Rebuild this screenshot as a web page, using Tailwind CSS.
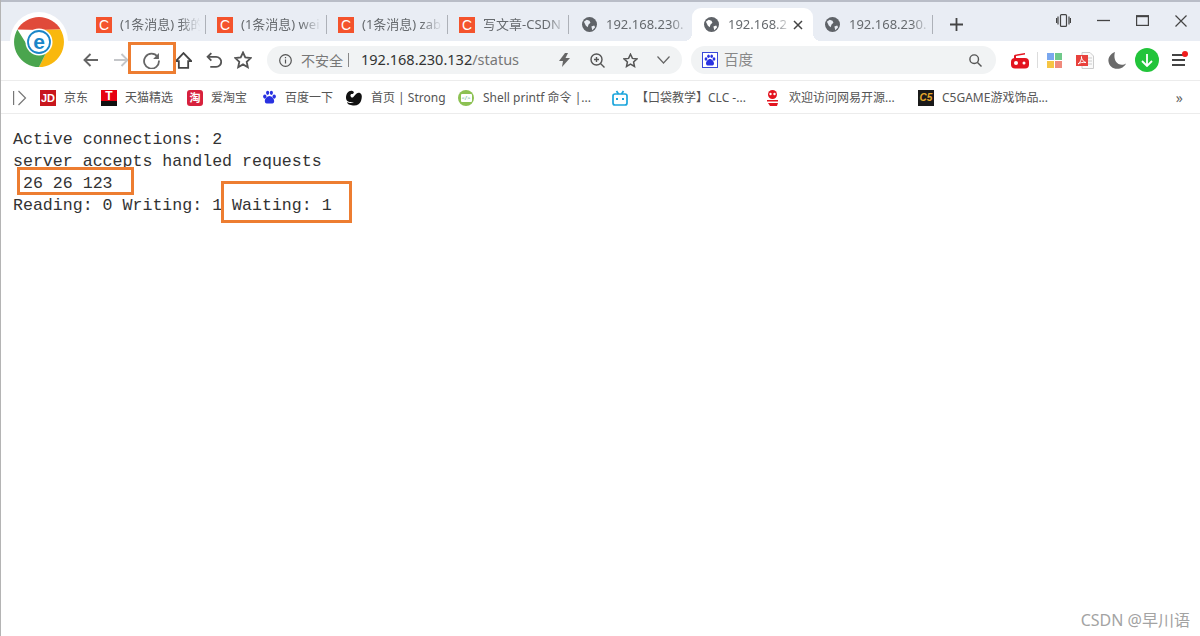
<!doctype html>
<html lang="zh">
<head>
<meta charset="utf-8">
<title>192.168.230.132/status</title>
<script src="https://cdn.jsdelivr.net/npm/@tailwindcss/browser@4"></script>
</head>
<body class="bg-white">
<div class="relative w-[1200px] h-[636px] overflow-hidden flex flex-col border-l border-[#b4b4b4] font-['Noto_Sans','Noto_Sans_CJK_SC',sans-serif] text-[#666a6e]">

  <!-- 标签栏 -->
  <div class="h-[41px] shrink-0 flex items-end bg-[#e9edf4] border-t-2 border-[#b9bdc7] pl-[85px] text-[13px]">
    <div class="w-[121px] h-[33px] flex items-center pl-[10px] pr-[1px]">
      <span class="w-4 h-4 shrink-0 bg-[#f4532c] text-white text-[14px] leading-4 text-center font-['Liberation_Sans']">C</span>
      <span class="ml-2 flex-1 whitespace-nowrap [mask-image:linear-gradient(to_right,black_70%,transparent_95%)]">(1条消息) 我的</span>
      <span class="w-px h-[19px] bg-[#adb1b8]"></span>
    </div>
    <div class="w-[121px] h-[33px] flex items-center pl-[10px] pr-[1px]">
      <span class="w-4 h-4 shrink-0 bg-[#f4532c] text-white text-[14px] leading-4 text-center font-['Liberation_Sans']">C</span>
      <span class="ml-2 flex-1 whitespace-nowrap [mask-image:linear-gradient(to_right,black_70%,transparent_95%)]">(1条消息) wei</span>
      <span class="w-px h-[19px] bg-[#adb1b8]"></span>
    </div>
    <div class="w-[121px] h-[33px] flex items-center pl-[10px] pr-[1px]">
      <span class="w-4 h-4 shrink-0 bg-[#f4532c] text-white text-[14px] leading-4 text-center font-['Liberation_Sans']">C</span>
      <span class="ml-2 flex-1 whitespace-nowrap [mask-image:linear-gradient(to_right,black_70%,transparent_95%)]">(1条消息) zab</span>
      <span class="w-px h-[19px] bg-[#adb1b8]"></span>
    </div>
    <div class="w-[121px] h-[33px] flex items-center pl-[10px] pr-[1px]">
      <span class="w-4 h-4 shrink-0 bg-[#f4532c] text-white text-[14px] leading-4 text-center font-['Liberation_Sans']">C</span>
      <span class="ml-2 flex-1 whitespace-nowrap [mask-image:linear-gradient(to_right,black_75%,transparent_98%)]">写文章-CSDN</span>
      <span class="w-px h-[19px] bg-[#adb1b8]"></span>
    </div>
    <div class="w-[122px] h-[33px] flex items-center pl-[12px] pr-[1px]">
      <svg class="w-[15px] h-[15px] shrink-0" viewBox="0 0 16 16"><circle cx="8" cy="8" r="8" fill="#5f6368"/><path d="M2 5l3-2 3 1 1 2-2 2-1 3-2-2-1-2zM10 10l3-1 1 2-3 3z" fill="#e9edf4"/></svg>
      <span class="ml-[9px] flex-1 whitespace-nowrap [mask-image:linear-gradient(to_right,black_75%,transparent_98%)]">192.168.230.</span>
    </div>
    <div class="relative w-[121px] h-[33px] flex items-center pl-[12px] pr-[10px] bg-white rounded-t-[9px] before:absolute before:left-[-8px] before:bottom-0 before:w-2 before:h-2 before:bg-[radial-gradient(circle_at_0_0,#e9edf4_8px,white_8px)] after:absolute after:right-[-8px] after:bottom-0 after:w-2 after:h-2 after:bg-[radial-gradient(circle_at_100%_0,#e9edf4_8px,white_8px)]">
      <svg class="w-[15px] h-[15px] shrink-0" viewBox="0 0 16 16"><circle cx="8" cy="8" r="8" fill="#5f6368"/><path d="M2 5l3-2 3 1 1 2-2 2-1 3-2-2-1-2zM10 10l3-1 1 2-3 3z" fill="#fff"/></svg>
      <span class="ml-[9px] flex-1 whitespace-nowrap [mask-image:linear-gradient(to_right,black_70%,transparent_98%)]">192.168.2</span>
      <svg class="w-[10px] h-[10px] shrink-0" viewBox="0 0 10 10"><path d="M1 1l8 8M9 1l-8 8" stroke="#444" stroke-width="1.500"/></svg>
    </div>
    <div class="w-[121px] h-[33px] flex items-center pl-[12px] pr-[1px]">
      <svg class="w-[15px] h-[15px] shrink-0" viewBox="0 0 16 16"><circle cx="8" cy="8" r="8" fill="#5f6368"/><path d="M2 5l3-2 3 1 1 2-2 2-1 3-2-2-1-2zM10 10l3-1 1 2-3 3z" fill="#e9edf4"/></svg>
      <span class="ml-[9px] flex-1 whitespace-nowrap [mask-image:linear-gradient(to_right,black_75%,transparent_98%)]">192.168.230.</span>
      <span class="w-px h-[19px] bg-[#adb1b8]"></span>
    </div>
    <div class="h-[33px] flex items-center">
      <svg class="ml-[16px] w-[13px] h-[13px]" viewBox="0 0 13 13"><path d="M6.500 0v13M0 6.500h13" stroke="#444" stroke-width="1.800"/></svg>
    </div>

    <!-- 窗口按钮 -->
    <div class="ml-auto flex items-center self-start h-[38px] pb-[1px] pr-[13px] gap-[26px]">
      <svg class="w-[15px] h-[13px]" viewBox="0 0 15 13" fill="none" stroke="#444" stroke-width="1.200"><rect x="4.500" y=".6" width="6" height="11.800" rx="1"/><path d="M2 2.500v8M13 2.500v8M.5 4v5M14.500 4v5"/></svg>
      <svg class="w-[13px] h-[13px]" viewBox="0 0 13 13"><path d="M0 6.500h13" stroke="#444" stroke-width="1.300"/></svg>
      <svg class="w-[13px] h-[11px]" viewBox="0 0 13 11" fill="none" stroke="#444"><rect x=".6" y="1" width="11.800" height="9.400" stroke-width="1.200"/><path d="M0 1.200h13" stroke-width="2"/></svg>
      <svg class="w-[12px] h-[12px]" viewBox="0 0 12 12"><path d="M.5.500l11 11M11.500.500l-11 11" stroke="#444" stroke-width="1.200"/></svg>
    </div>
  </div>

  <!-- 工具栏 -->
  <div class="h-[39px] shrink-0 flex items-center bg-white pb-[1px]">
    <div class="w-[266px] shrink-0 flex items-center pl-[82px]">
      <svg class="w-4 h-[14px]" viewBox="0 0 16 14" fill="none" stroke="#666" stroke-width="1.900"><path d="M15 7H1.500M7.500 1L1.500 7l6 6"/></svg>
      <svg class="ml-[14px] w-4 h-[14px]" viewBox="0 0 16 14" fill="none" stroke="#c4c6c9" stroke-width="1.900"><path d="M1 7h13.500M8.500 1l6 6-6 6"/></svg>
      <svg class="ml-[14px] w-[17px] h-[17px]" viewBox="0 0 16 16" fill="none" stroke="#666" stroke-width="1.700"><path d="M13.700 4.500A7 7 0 1 0 15 8"/><path d="M15 1v5.500H9.500z" fill="#666" stroke="none"/></svg>
      <svg class="ml-[15px] w-[17px] h-[17px]" viewBox="0 0 16 16" fill="none" stroke="#444" stroke-width="1.700"><path d="M.8 8.500L8 1l7.200 7.500h-2.800V15H3.600V8.500z"/></svg>
      <svg class="ml-[14px] w-4 h-4" viewBox="0 0 15 15" fill="none" stroke="#555" stroke-width="1.700"><path d="M5 1L1.500 4.500 5 8M1.500 4.500h8a4.500 4.500 0 0 1 0 9.500H4"/></svg>
      <svg class="ml-[12px] w-[18px] h-[18px]" viewBox="0 0 18 18" fill="none" stroke="#555" stroke-width="1.800"><path d="M9 1.500l2.300 5 5.400.6-4 3.700 1.100 5.400L9 13.400 4.200 16.200l1.100-5.400-4-3.700 5.400-.6z"/></svg>
    </div>

    <div class="w-[415px] h-[28px] shrink-0 flex items-center rounded-full bg-[#f1f3f4] pl-[12px] text-[14.500px]">
      <svg class="w-[13px] h-[13px] shrink-0" viewBox="0 0 13 13" fill="none" stroke="#555" stroke-width="1.200"><circle cx="6.500" cy="6.500" r="5.800"/><path d="M6.500 5.500v4M6.500 3v1.300"/></svg>
      <span class="ml-[9px] text-[14px] text-[#777]">不安全</span>
      <span class="ml-[5px] w-px h-[14px] bg-[#888]"></span>
      <span class="ml-[12px] text-[#333]">192.168.230.132<span class="text-[#777]">/status</span></span>
      <svg class="ml-auto w-[11px] h-[14px] shrink-0" viewBox="0 0 11 14" fill="#666"><path d="M6 0L0 8h4l-1 6 8-9H6.500L9 0z"/></svg>
      <svg class="ml-[20px] w-[15px] h-[15px] shrink-0" viewBox="0 0 15 15" fill="none" stroke="#555" stroke-width="1.400"><circle cx="6.500" cy="6.500" r="5.500"/><path d="M10.500 10.500l4 4M4 6.500h5M6.500 4v5"/></svg>
      <svg class="ml-[18px] w-[15px] h-[15px] shrink-0" viewBox="0 0 18 18" fill="none" stroke="#555" stroke-width="1.800"><path d="M9 1.500l2.300 5 5.400.6-4 3.700 1.100 5.400L9 13.400 4.200 16.200l1.100-5.400-4-3.700 5.400-.6z"/></svg>
      <svg class="ml-[19px] mr-[12px] w-[13px] h-[8px] shrink-0" viewBox="0 0 13 8" fill="none" stroke="#666" stroke-width="1.200"><path d="M.5.500l6 6.500 6-6.500"/></svg>
    </div>

    <div class="ml-[9px] w-[305px] h-[28px] shrink-0 flex items-center rounded-full bg-[#f1f3f4] pl-[11px] text-[14.500px] text-[#888]">
      <svg class="w-4 h-4 shrink-0" viewBox="0 0 16 16"><rect x=".5" y=".5" width="15" height="15" fill="#fff" stroke="#3a49d8"/><g fill="#2932e1"><ellipse cx="4" cy="7" rx="1.400" ry="1.800"/><ellipse cx="6.500" cy="4.200" rx="1.300" ry="1.800"/><ellipse cx="9.700" cy="4.200" rx="1.300" ry="1.800"/><ellipse cx="12" cy="7" rx="1.400" ry="1.800"/><path d="M8 7c-2 0-4 2.500-4 4.500C4 14 6.500 13.500 8 13.500s4 .5 4-2C12 9.500 10 7 8 7z"/></g></svg>
      <span class="ml-[6px]">百度</span>
      <svg class="ml-auto mr-[14px] w-[13px] h-[13px]" viewBox="0 0 13 13" fill="none" stroke="#555" stroke-width="1.400"><circle cx="5.200" cy="5.200" r="4.300"/><path d="M8.500 8.500l4 4"/></svg>
    </div>

    <div class="ml-[15px] flex items-center">
      <svg class="w-[18px] h-[17px]" viewBox="0 0 18 17" fill="#e3141f"><path d="M3 6.500V4q0-1 1-1.300L14 1v1.500L5 4v2.500z"/><rect y="6" width="18" height="10.500" rx="4"/><circle cx="5" cy="11" r="2" fill="#fff"/><circle cx="13" cy="11" r="1.500" fill="#fff"/></svg>
      <span class="ml-[8px] w-px h-[16px] bg-[#dcdcdc]"></span>
      <div class="ml-[9px] w-[15px] h-[15px] grid grid-cols-2 gap-[1px]">
        <span class="bg-[#7aa7ee]"></span><span class="bg-[#6fc98a]"></span><span class="bg-[#f6c544]"></span><span class="bg-[#f08a7c]"></span>
      </div>
      <svg class="ml-[14px] w-[18px] h-[17px]" viewBox="0 0 18 17"><path d="M6 .5h8l3.500 3.500v12.500H6z" fill="#fafafa" stroke="#ccc"/><path d="M12 6h4M12 9h4M12 12h4" stroke="#ccc"/><rect y="3" width="12" height="11" fill="#e8413c"/><path d="M2 12c2-1 4-5 3.500-7.500C5 6 7 10 10 10.500 7 10 4 10.500 2 12z" fill="none" stroke="#fff"/></svg>
      <svg class="ml-[14px] w-[18px] h-[17px]" viewBox="0 0 18 17"><path d="M7 0C2 2 0 6 .5 9.500 1 14 5 17 9.500 16.800c3.500 0 7-2 8.500-5.300-2 1.500-5 1.800-7.500.5C7 10 5.500 5 7 0z" fill="#6a6a6a"/></svg>
      <span class="ml-[9px] w-6 h-6 flex items-center justify-center rounded-full bg-[#22c43a]">
        <svg class="w-[12px] h-[13px]" viewBox="0 0 12 13" fill="none" stroke="#fff" stroke-width="1.800"><path d="M6 0v12M1 7l5 5 5-5"/></svg>
      </span>
      <span class="relative ml-[13px] w-[13px] h-[12px] flex flex-col justify-between">
        <span class="h-[2px] bg-[#444]"></span><span class="h-[2px] bg-[#444]"></span><span class="h-[2px] bg-[#444]"></span>
        <span class="absolute -top-[3px] right-[-3px] w-[6px] h-[6px] rounded-full bg-[#f01c1c]"></span>
      </span>
    </div>
  </div>

  <!-- 书签栏 -->
  <div class="h-[34px] shrink-0 flex items-center bg-white pt-[1px] border-t border-b border-[#ececec] text-[12px] whitespace-nowrap text-[#555]">
    <svg class="ml-[12px] w-[14px] h-[16px]" viewBox="0 0 14 16" fill="none" stroke="#777" stroke-width="1.200"><path d="M.6 1v14"/><path d="M5.500 1l7 7-7 7"/></svg>
    <span class="ml-[13px] w-4 h-4 bg-[#c8161d] text-white text-[11px] leading-4 text-center font-bold font-['Liberation_Sans']">JD</span>
    <span class="ml-2 w-[37px]">京东</span>
    <span class="w-4 h-4 bg-[linear-gradient(#e60012_70%,#111_70%)] text-white text-[12px] leading-[12px] text-center font-bold font-['Liberation_Sans']">T</span>
    <span class="ml-2 w-[62px]">天猫精选</span>
    <span class="w-4 h-4 rounded-[3px] bg-[#d7213d] text-white text-[11px] leading-4 text-center font-bold">淘</span>
    <span class="ml-2 w-[51px]">爱淘宝</span>
    <svg class="w-[15px] h-[15px]" viewBox="0 0 16 16"><g fill="#2932e1"><ellipse cx="3" cy="7" rx="1.800" ry="2.200"/><ellipse cx="6" cy="3" rx="1.700" ry="2.300"/><ellipse cx="10" cy="3" rx="1.700" ry="2.300"/><ellipse cx="13" cy="7" rx="1.800" ry="2.200"/><path d="M8 6.500c-2.500 0-5 3-5 5.500 0 3 3 2.500 5 2.500s5 .5 5-2.500c0-2.500-2.500-5.500-5-5.500z"/></g></svg>
    <span class="ml-2 w-[61px]">百度一下</span>
    <svg class="w-4 h-4" viewBox="0 0 16 16"><path d="M0 8C0 3 3 0 6.500 1 9 2 7.500 4 6 4 4 4 4 6.500 5.500 7.500 8 8.500 10 1 14 3c2.500 1.500 2 5 1 8-1 3-4 5-8 4.500-3-.3-6-1.500-6-3.500 1.500 1 4.500 1.500 7 .5C5 12.500 0 12 0 8z" fill="#111"/></svg>
    <span class="ml-[9px] w-[87px]">首页 | Strong</span>
    <span class="w-4 h-4 rounded-full bg-[#8cc152] flex items-center justify-center"><span class="w-[11px] h-[8px] rounded-[1px] bg-white text-[6px] leading-[8px] text-center text-[#4a7]">&lt;/&gt;</span></span>
    <span class="ml-[9px] w-[129px]">Shell printf 命令 |...</span>
    <svg class="w-4 h-4" viewBox="0 0 16 16" fill="none" stroke="#1ba5dc" stroke-width="1.700"><rect x="1" y="4" width="14" height="11" rx="2"/><path d="M4.500 1l2 3M11.500 1l-2 3"/><path d="M5 8v2M11 8v2" stroke-width="2"/></svg>
    <span class="ml-2 w-[129px]">【口袋教学】CLC -...</span>
    <svg class="w-[15px] h-4" viewBox="0 0 15 16" fill="#e3141f"><circle cx="7.500" cy="4.500" r="4.500"/><circle cx="5.500" cy="4" r="1.200" fill="#fff"/><circle cx="9.500" cy="4" r="1.200" fill="#fff"/><path d="M2 10h11v1.500H2zM3 13h10l-1 3H5z"/></svg>
    <span class="ml-[9px] w-[129px]">欢迎访问网易开源...</span>
    <span class="w-4 h-4 bg-[#1a1a1a] text-[#e8a92c] text-[10px] leading-4 text-center font-bold italic font-['Liberation_Sans']">C5</span>
    <span class="ml-2">C5GAME游戏饰品...</span>
    <span class="ml-auto mr-[17px] text-[14px] leading-none text-[#666]">»</span>
  </div>

  <!-- 页面内容 -->
  <pre class="flex-1 pl-[12px] pt-[15px] font-['Liberation_Mono',monospace] text-[16.600px] leading-[22px] text-[#333]">Active connections: 2
server accepts handled requests
 26 26 123
Reading: 0 Writing: 1 Waiting: 1</pre>

  <!-- 浏览器图标 -->
  <div class="absolute left-[9px] top-[12px] w-[58px] h-[58px] rounded-full bg-white flex items-center justify-center">
    <svg class="w-[50px] h-[50px] mt-[2px]" viewBox="-25 -25 50 50">
      <path d="M-21.600-12.500A25 25 0 0 1 21.600-12.500L0-12z" fill="#e04a3a"/>
      <path d="M21.600-12.500A25 25 0 0 1 0 25L10 5 0-12z" fill="#f9b80e"/>
      <path d="M0 25A25 25 0 0 1-21.600-12.500L-10 6 10 5z" fill="#4aa54e"/>
      <circle r="13.500" fill="#fff"/>
      <circle r="11" fill="none" stroke="#1a86c8" stroke-width="1.800"/>
      <text x="0" y="6.500" text-anchor="middle" font-size="21" font-weight="700" fill="#1a86c8" font-family="Liberation Sans">e</text>
    </svg>
  </div>

  <!-- 橙色标注框 -->
  <div class="absolute left-[127px] top-[42px] w-[48px] h-[32px] border-[3px] border-[#ed7d31]"></div>
  <div class="absolute left-[16px] top-[167px] w-[117px] h-[28px] border-[3px] border-[#ed7d31]"></div>
  <div class="absolute left-[220px] top-[181px] w-[131px] h-[42px] border-[3px] border-[#ed7d31]"></div>

  <!-- 水印 -->
  <span class="absolute right-[10px] bottom-[4px] text-[16px] text-[#a3a3a3]">CSDN @早川语</span>
</div>
</body>
</html>
